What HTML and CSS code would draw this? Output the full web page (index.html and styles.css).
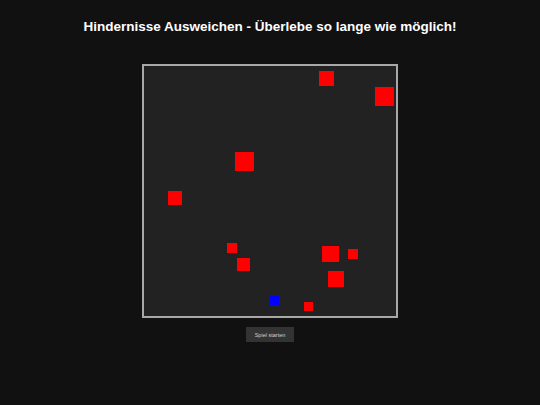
FILE: index.html
```html
<!DOCTYPE html>
<html lang="de">
<head>
<meta charset="utf-8">
<title>Hindernisse Ausweichen</title>
<link rel="stylesheet" href="styles.css">
</head>
<body>
<main class="page">
  <h1 class="title">Hindernisse Ausweichen - Überlebe so lange wie möglich!</h1>
  <div class="board">
    <div class="block" style="left:175px;top:5px;width:15px;height:15px"></div>
    <div class="block" style="left:231px;top:21px;width:19px;height:19px"></div>
    <div class="block" style="left:91px;top:86px;width:19px;height:19px"></div>
    <div class="block" style="left:24px;top:125px;width:14px;height:14px"></div>
    <div class="block" style="left:83px;top:177px;width:10px;height:10px"></div>
    <div class="block" style="left:93px;top:192px;width:13px;height:13px"></div>
    <div class="block" style="left:178px;top:180px;width:17px;height:16px"></div>
    <div class="block" style="left:204px;top:183px;width:10px;height:10px"></div>
    <div class="block" style="left:184px;top:205px;width:16px;height:16px"></div>
    <div class="block" style="left:160px;top:236px;width:9px;height:9px"></div>
    <div class="player" style="left:126px;top:230px"></div>
  </div>
  <button class="start" type="button">Spiel starten</button>
</main>
</body>
</html>
```

FILE: styles.css
```css
html, body {
  margin: 0;
  padding: 0;
  background: #111111;
  height: 100%;
}

.page {
  display: flex;
  flex-direction: column;
  align-items: center;
  font-family: "Liberation Sans", Arial, sans-serif;
  color: #ffffff;
}

.title {
  margin: 19px 0 0;
  font-size: 13.5px;
  font-weight: bold;
  line-height: 16px;
}

.board {
  position: relative;
  margin-top: 29px;
  width: 252px;
  height: 250px;
  border: 2px solid #a8a8a8;
  background: #222222;
}

.block {
  position: absolute;
  background: #ff0000;
}

.player {
  position: absolute;
  width: 9px;
  height: 9px;
  background: #0000ff;
}

.start {
  margin-top: 9px;
  width: 48px;
  height: 15px;
  padding: 0;
  border: none;
  background: #333333;
  color: #d0d0d0;
  font-family: "Liberation Sans", Arial, sans-serif;
  font-size: 5.5px;
}
```
